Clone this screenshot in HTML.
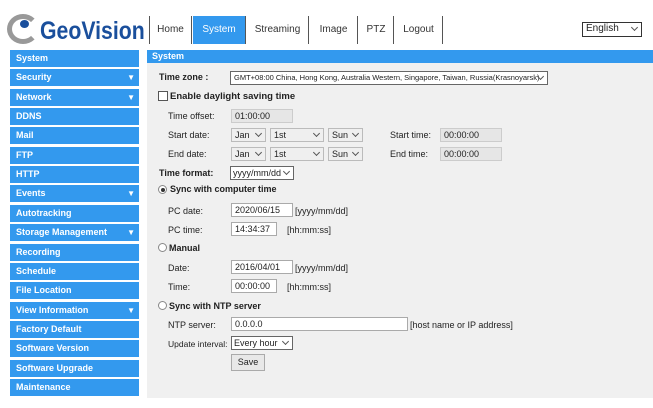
<!DOCTYPE html><html><head><style>
*{margin:0;padding:0;box-sizing:border-box}
body{width:653px;height:408px;background:#fff;font-family:"Liberation Sans",Arial,sans-serif;font-size:9px;color:#222;position:relative;overflow:hidden}
.a{position:absolute;white-space:nowrap}
.side{position:absolute;left:10px;width:129px;height:17px;background:#3399ee;color:#fff;font-weight:bold;font-size:9px;line-height:17px;padding-left:6px}
.side .t{position:absolute;right:4px;top:0;font-size:8px}
.tab{position:absolute;top:16px;height:28px;line-height:28px;font-size:10px;color:#333;text-align:center;border-right:1px solid #555}
.in{position:absolute;height:14px;background:#fff;border:1px solid #aaa;font-size:9px;line-height:12px;padding-left:3px}
.dis{background:#e6e6e6;border-color:#ccc}
.sel{position:absolute;height:14px;border:1px solid #bbb;font-size:9px;line-height:12px;padding-left:3px;background:#efefef;overflow:hidden}
.sel.w{background:#fff;border-color:#666}
.sel:after{content:"";position:absolute;right:4px;top:2px;width:4px;height:4px;border-right:1px solid #555;border-bottom:1px solid #555;transform:rotate(45deg)}
.b{font-weight:bold}
.rad{position:absolute;width:9px;height:9px;border:1px solid #888;border-radius:50%;background:#fff}
.l{top:1px}
</style></head><body>
<div class="a" style="left:7px;top:14px;width:32px;height:30px;border:5px solid #999;border-right-color:transparent;border-radius:50%"></div>
<div class="a" style="left:20px;top:20px;width:9px;height:8px;background:#1a4f9c;border-radius:50%"></div>
<div class="a" style="left:40px;top:17px;font-size:25px;font-weight:bold;color:#1a4f9c;transform:scaleX(0.85);transform-origin:left top">GeoVision</div>
<div class="a" style="left:149px;top:16px;height:28px;border-left:1px solid #555"></div>
<div class="tab" style="left:150px;width:42px">Home</div>
<div class="tab" style="left:193px;width:53px;background:#3399ee;color:#fff">System</div>
<div class="tab" style="left:247px;width:62px">Streaming</div>
<div class="tab" style="left:310px;width:48px">Image</div>
<div class="tab" style="left:359px;width:35px">PTZ</div>
<div class="tab" style="left:395px;width:48px">Logout</div>
<div class="sel w" style="left:582px;top:22px;width:60px;height:15px;font-size:10px;border-color:#333">English</div>

<div class="side" style="top:50px">System</div>
<div class="side" style="top:69px">Security<span class="t">▼</span></div>
<div class="side" style="top:89px">Network<span class="t">▼</span></div>
<div class="side" style="top:108px">DDNS</div>
<div class="side" style="top:127px">Mail</div>
<div class="side" style="top:147px">FTP</div>
<div class="side" style="top:166px">HTTP</div>
<div class="side" style="top:185px">Events<span class="t">▼</span></div>
<div class="side" style="top:205px">Autotracking</div>
<div class="side" style="top:224px">Storage Management<span class="t">▼</span></div>
<div class="side" style="top:244px">Recording</div>
<div class="side" style="top:263px">Schedule</div>
<div class="side" style="top:282px">File Location</div>
<div class="side" style="top:302px">View Information<span class="t">▼</span></div>
<div class="side" style="top:321px">Factory Default</div>
<div class="side" style="top:340px">Software Version</div>
<div class="side" style="top:360px">Software Upgrade</div>
<div class="side" style="top:379px">Maintenance</div>

<div class="a" style="left:147px;top:50px;width:506px;height:348px;background:#f0f0f0"></div>
<div class="a" style="left:147px;top:50px;width:506px;height:13px;background:#3399ee;color:#fff;font-weight:bold;padding-left:5px;line-height:13px">System</div>

<div class="a b" style="left:159px;top:72px">Time zone :</div>
<div class="sel w" style="left:230px;top:71px;width:318px;font-size:7.5px">GMT+08:00 China, Hong Kong, Australia Western, Singapore, Taiwan, Russia(Krasnoyarsk)</div>
<div class="a" style="left:158px;top:91px;width:10px;height:10px;border:1px solid #555;background:#fff"></div>
<div class="a b" style="left:170px;top:91px;font-size:9.5px">Enable daylight saving time</div>
<div class="a" style="left:168px;top:111px">Time offset:</div>
<div class="in dis" style="left:231px;top:109px;width:62px">01:00:00</div>
<div class="a" style="left:168px;top:130px">Start date:</div>
<div class="sel" style="left:231px;top:128px;width:35px">Jan</div>
<div class="sel" style="left:270px;top:128px;width:54px">1st</div>
<div class="sel" style="left:328px;top:128px;width:35px">Sun</div>
<div class="a" style="left:390px;top:130px">Start time:</div>
<div class="in dis" style="left:440px;top:128px;width:62px">00:00:00</div>
<div class="a" style="left:168px;top:149px">End date:</div>
<div class="sel" style="left:231px;top:147px;width:35px">Jan</div>
<div class="sel" style="left:270px;top:147px;width:54px">1st</div>
<div class="sel" style="left:328px;top:147px;width:35px">Sun</div>
<div class="a" style="left:390px;top:149px">End time:</div>
<div class="in dis" style="left:440px;top:147px;width:62px">00:00:00</div>
<div class="a b" style="left:159px;top:168px">Time format:</div>
<div class="sel w" style="left:230px;top:166px;width:64px;padding-left:2px">yyyy/mm/dd</div>
<div class="rad" style="left:158px;top:185px"></div><div class="a" style="left:161px;top:188px;width:4px;height:4px;background:#333;border-radius:50%"></div>
<div class="a b" style="left:170px;top:184px">Sync with computer time</div>
<div class="a" style="left:168px;top:206px">PC date:</div>
<div class="in" style="left:231px;top:203px;width:62px">2020/06/15</div>
<div class="a" style="left:295px;top:206px">[yyyy/mm/dd]</div>
<div class="a" style="left:168px;top:225px">PC time:</div>
<div class="in" style="left:231px;top:222px;width:46px">14:34:37</div>
<div class="a" style="left:287px;top:225px">[hh:mm:ss]</div>
<div class="rad" style="left:158px;top:243px"></div>
<div class="a b" style="left:169px;top:243px">Manual</div>
<div class="a" style="left:168px;top:263px">Date:</div>
<div class="in" style="left:231px;top:260px;width:62px">2016/04/01</div>
<div class="a" style="left:295px;top:263px">[yyyy/mm/dd]</div>
<div class="a" style="left:168px;top:282px">Time:</div>
<div class="in" style="left:231px;top:279px;width:46px">00:00:00</div>
<div class="a" style="left:287px;top:282px">[hh:mm:ss]</div>
<div class="rad" style="left:158px;top:301px"></div>
<div class="a b" style="left:169px;top:301px">Sync with NTP server</div>
<div class="a" style="left:168px;top:320px">NTP server:</div>
<div class="in" style="left:231px;top:317px;width:177px">0.0.0.0</div>
<div class="a" style="left:410px;top:320px">[host name or IP address]</div>
<div class="a" style="left:168px;top:339px;font-size:8.5px">Update interval:</div>
<div class="sel w" style="left:231px;top:336px;width:62px;font-size:9px;padding-left:2px">Every hour</div>
<div class="a" style="left:231px;top:354px;width:34px;height:17px;border:1px solid #aaa;background:#e8e8e8;text-align:center;line-height:15px">Save</div>
</body></html>
